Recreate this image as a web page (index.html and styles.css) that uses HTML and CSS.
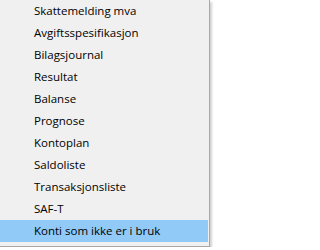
FILE: index.html
```html
<!DOCTYPE html>
<html>
<head>
<meta charset="utf-8">
<link rel="stylesheet" href="styles.css">
</head>
<body>
<div class="menu">
  <ul class="items">
    <li class="item">Skattemelding mva</li>
    <li class="item">Avgiftsspesifikasjon</li>
    <li class="item">Bilagsjournal</li>
    <li class="item">Resultat</li>
    <li class="item">Balanse</li>
    <li class="item">Prognose</li>
    <li class="item">Kontoplan</li>
    <li class="item">Saldoliste</li>
    <li class="item">Transaksjonsliste</li>
    <li class="item">SAF-T</li>
    <li class="item active">Konti som ikke er i bruk</li>
  </ul>
</div>
</body>
</html>
```
FILE: styles.css
```css
html, body {
  margin: 0;
  padding: 0;
  background: #ffffff;
}
.menu {
  width: 209px;
  background: #f0f0f0;
  border-right: 1px solid #a8a8a8;
  border-bottom: 1px solid #a8a8a8;
  box-shadow: 2px 2px 2px rgba(0,0,0,0.18);
  padding-bottom: 4px;
}
.items {
  list-style: none;
  margin: 0;
  padding: 0 1px 0 0;
}
.item {
  height: 22px;
  line-height: 22px;
  padding-left: 34px;
  font-family: "Open Sans", "Noto Sans", sans-serif;
  font-size: 11.5px;
  color: #000;
  white-space: nowrap;
}
.item.active {
  background: #91c9f7;
}
```
